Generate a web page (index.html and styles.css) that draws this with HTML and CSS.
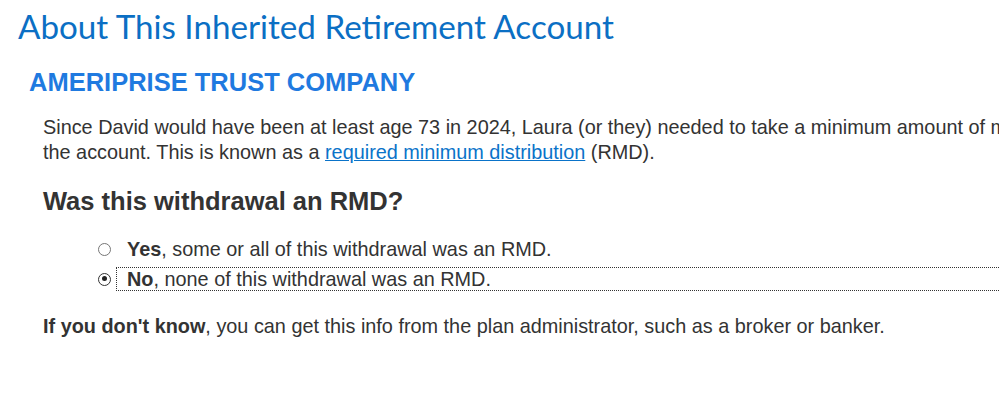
FILE: index.html
```html
<!DOCTYPE html>
<html lang="en">
<head>
<meta charset="utf-8">
<title>About This Inherited Retirement Account</title>
<link rel="stylesheet" href="styles.css">
</head>
<body>
<div class="page">
  <h1 class="title">About This Inherited Retirement Account</h1>
  <h2 class="company">AMERIPRISE TRUST COMPANY</h2>
  <div class="content">
    <p class="intro">Since David would have been at least age 73 in 2024, Laura (or they) needed to take a minimum amount of money out of<br>the account. This is known as a <a href="#" class="link">required minimum distribution</a> (RMD).</p>
    <h3 class="question">Was this withdrawal an RMD?</h3>
    <div class="options">
      <label class="option">
        <span class="radio"></span>
        <span class="label-text"><b>Yes</b>, some or all of this withdrawal was an RMD.</span>
      </label>
      <label class="option">
        <span class="radio checked"></span>
        <span class="label-text focused"><b>No</b>, none of this withdrawal was an RMD.</span>
      </label>
    </div>
    <p class="note"><b>If you don't know</b>, you can get this info from the plan administrator, such as a broker or banker.</p>
  </div>
</div>
</body>
</html>
```
FILE: styles.css
```css
html, body {
  margin: 0;
  padding: 0;
  background: #fff;
  overflow: hidden;
}
.page {
  width: 1400px;
  padding: 6px 0 0 18px;
  font-family: "Liberation Sans", Arial, sans-serif;
  color: #333;
}
.title {
  margin: 0;
  font-family: Lato, "Open Sans", sans-serif;
  font-weight: 400;
  font-size: 33.2px;
  line-height: 40px;
  color: #0b6fc4;
}
.company {
  margin: 21px 0 0 11px;
  font-size: 25.5px;
  line-height: 30px;
  font-weight: 700;
  color: #1f7ae0;
}
.content {
  padding-left: 25px;
}
.intro {
  margin: 18px 0 0 0;
  font-size: 19.85px;
  line-height: 25px;
}
.link {
  color: #0a73c9;
  text-decoration: underline;
}
.question {
  margin: 21px 0 0 0;
  font-size: 25.5px;
  line-height: 30px;
  font-weight: 700;
  color: #333;
}
.options {
  margin: 22px 0 0 55px;
  display: flex;
  flex-direction: column;
  gap: 8px;
}
.option {
  display: flex;
  align-items: center;
  gap: 16px;
  font-size: 19.85px;
  line-height: 22px;
}
.radio {
  width: 13px;
  height: 13px;
  border: 1px solid #767676;
  border-radius: 50%;
  flex: none;
  box-sizing: border-box;
  position: relative;
}
.radio.checked {
  border: 1.5px solid #333;
}
.radio.checked::after {
  content: "";
  position: absolute;
  left: 2.5px;
  top: 2.5px;
  width: 5px;
  height: 5px;
  border-radius: 50%;
  background: #222;
}
.focused {
  flex: 1;
  outline: 1px dotted #333;
  padding-left: 10px;
  margin-left: -10px;
}
.note {
  margin: 24px 0 0 0;
  font-size: 19.85px;
  line-height: 25px;
}
```
